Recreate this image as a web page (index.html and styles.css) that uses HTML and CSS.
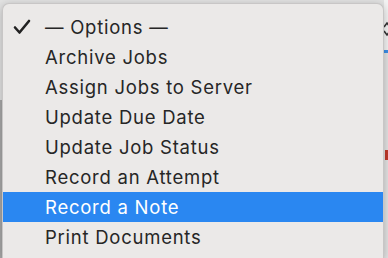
FILE: index.html
```html
<!DOCTYPE html>
<html>
<head>
<meta charset="utf-8">
<link rel="stylesheet" href="styles.css">
</head>
<body>
<div class="backdrop">
  <div class="bg-right-top"></div>
  <div class="bg-arrows">
    <svg width="8" height="16" viewBox="0 0 8 16"><path d="M1 6 L4 2 L7 6 M1 10 L4 14 L7 10" fill="none" stroke="#333" stroke-width="1.6"/></svg>
  </div>
  <div class="bg-blue-line"></div>
  <div class="bg-red-right"></div>
  <div class="bg-red-left"></div>
  <div class="bg-left"></div>
</div>
<div class="menu">
  <div class="item checked"><span class="check">
    <svg width="18" height="16" viewBox="0 0 18 16"><path d="M2 8.5 L6.5 13.5 L16 2" fill="none" stroke="#222" stroke-width="2.6" stroke-linecap="round" stroke-linejoin="round"/></svg>
  </span>— Options —</div>
  <div class="item">Archive Jobs</div>
  <div class="item">Assign Jobs to Server</div>
  <div class="item">Update Due Date</div>
  <div class="item">Update Job Status</div>
  <div class="item">Record an Attempt</div>
  <div class="item active">Record a Note</div>
  <div class="item">Print Documents</div>
</div>
</body>
</html>
```
FILE: styles.css
```css
html, body {
  margin: 0;
  padding: 0;
}
body {
  width: 388px;
  height: 258px;
  overflow: hidden;
  position: relative;
  background: #e2e2e2;
  font-family: Inter, "Noto Sans", sans-serif;
}
.backdrop {
  position: absolute;
  inset: 0;
}
.bg-right-top {
  position: absolute;
  left: 384px;
  top: 0;
  width: 4px;
  height: 50px;
  background: #f3f3f3;
}
.bg-arrows {
  position: absolute;
  left: 383px;
  top: 21px;
}
.bg-blue-line {
  position: absolute;
  left: 384px;
  top: 50px;
  width: 4px;
  height: 3px;
  background: #3c8fe8;
}
.bg-red-right {
  position: absolute;
  left: 385px;
  top: 150px;
  width: 3px;
  height: 10px;
  background: #c0392b;
}
.bg-red-left {
  position: absolute;
  left: 0;
  top: 168px;
  width: 2px;
  height: 6px;
  background: #c0392b;
}
.bg-left {
  position: absolute;
  left: 0;
  top: 100px;
  width: 2px;
  height: 158px;
  background: #a8a8a8;
}
.menu {
  position: relative;
  margin: 3px 0 0 2px;
  width: 382px;
  height: 255px;
  box-sizing: border-box;
  padding-top: 8px;
  overflow: hidden;
  background: #ebe9e8;
  border: 1px solid #c8c6c6;
  border-bottom: none;
  border-radius: 7px 7px 0 0;
  box-shadow: 0 2px 8px rgba(0,0,0,0.25);
}
.item {
  height: 30px;
  line-height: 30px;
  padding-left: 42px;
  font-size: 18.5px;
  letter-spacing: 0.75px;
  color: #262626;
  position: relative;
}
.check {
  position: absolute;
  left: 10px;
  top: 7px;
  width: 18px;
  height: 16px;
  line-height: 0;
}
.item.active {
  background: #2a87f1;
  color: #ffffff;
}
```
